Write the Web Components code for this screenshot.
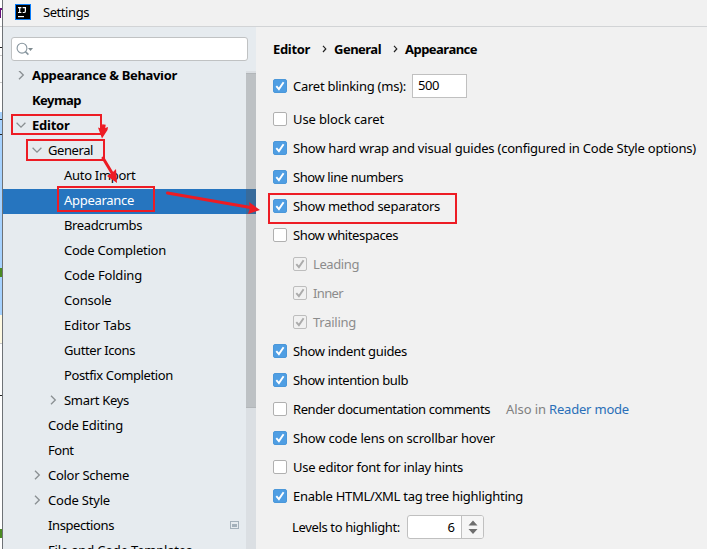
<!DOCTYPE html>
<html lang="en">
<head>
<meta charset="utf-8">
<title>Settings</title>
<style>
html,body{margin:0;height:100%;overflow:hidden}
body{font:13px/18px "Noto Sans","Open Sans",sans-serif;color:#000;background:#f1f1f1}
</style>
</head>
<body>
<settings-window></settings-window>
<script>
/* Text label that tracks its glyphs so that it spans the width given in w. */
class FitText extends HTMLElement{
  connectedCallback(){
    this.attachShadow({mode:'open'}).innerHTML=`<style>:host{display:inline-block;white-space:pre;flex:none}span{display:inline-block}</style><span><slot></slot></span>`;
    const s=this.shadowRoot.querySelector('span'),w=+this.getAttribute('w');
    if(w){
      const n=this.textContent.length;
      s.style.letterSpacing=((w-s.getBoundingClientRect().width)/n)+'px';
      this.style.width=w+'px';
    }
  }
}
class EditorStrip extends HTMLElement{
  connectedCallback(){
    this.attachShadow({mode:'open'}).innerHTML=`<style>:host{display:block;width:2px;flex:none;border-right:1px solid #6e7276;overflow:hidden}svg{display:block}</style>
    <svg width="2" height="549" shape-rendering="crispEdges"><rect width="2" height="549" fill="#fff"/><path fill="#a6d2ff" d="M0 112h2v203H0z"/><path fill="#fffae3" d="M0 315h2v28H0z"/>
    <path fill="#660e7a" d="M0 8h1v10H0zM1 8h1v2H1z"/><path fill="#c9c9c9" d="M0 26h2v1H0zM0 55h2v1H0zM0 82h2v1H0zM0 343h2v1H0z"/><path fill="#222" d="M0 47h2v1H0zM0 119h2v1H0zM0 134h2v1H0zM0 395h2v1H0z"/><path fill="#4b8b22" d="M0 268h2v9H0zM0 529h2v9H0z"/></svg>`;
  }
}
class TitleBar extends HTMLElement{
  connectedCallback(){
    this.attachShadow({mode:'open'}).innerHTML=`<style>:host{display:flex;align-items:center;height:27px;box-sizing:border-box;padding:0 0 2px 12px;gap:12px;border-bottom:1px solid #d2d4d6;background:#f1f1f1}svg{display:block;flex:none}</style>
    <svg width="16" height="16" viewBox="0 0 16 16"><rect width="16" height="16" fill="#087cfa"/><rect x="1" y="1" width="14" height="14" fill="#000"/><path d="M3 3.6h3.4M4.7 3.6v5M3 8.5h3.4M7.6 3.6h2.8v3.6q0 1.3-1.4 1.3H7.7" fill="none" stroke="#fff" stroke-width="1.2"/><path d="M3 12h6v1.2H3z" fill="#fff"/></svg><fit-text w="46">Settings</fit-text>`;
  }
}
class SearchBox extends HTMLElement{
  connectedCallback(){
    this.attachShadow({mode:'open'}).innerHTML=`<style>:host{display:block;box-sizing:border-box;width:237px;height:24px;border:1px solid #c0c2c3;border-radius:3px;background:#fff;padding:4px 0 0 4px}svg{display:block}</style>
    <svg width="18" height="15" viewBox="0 0 18 15"><circle cx="6" cy="6.200" r="4.900" fill="none" stroke="#87959e" stroke-width="1.1"/><path d="m9.4 9.6 3 3" stroke="#87959e" stroke-width="1.5"/><path d="M12 6h5l-2.500 3z" fill="#7f8b91"/></svg>`;
  }
}
class TreeRow extends HTMLElement{
  connectedCallback(){
    const lvl=+this.getAttribute('level')||0,a=this.getAttribute('arrow'),w=this.getAttribute('w');
    const d=a==='open'?'M1.6 3.8 6 8.2l4.4-4.4':'m4 1.7 4.3 4.3L4 10.3';
    this.attachShadow({mode:'open'}).innerHTML=`<style>:host{display:flex;align-items:center;height:25px;box-sizing:border-box;padding:0 0 3px ${12+lvl*16}px;flex:none;font-weight:${lvl?400:700}}
    :host([selected]){background:#2675bf;color:#fff}.a{display:block;width:12px;height:12px;margin-right:5px;flex:none}.m{margin-left:auto;margin-right:7px}</style>
    <svg class="a" viewBox="0 0 12 12">${a?`<path d="${d}" fill="none" stroke="#8a8f92" stroke-width="1.3"/>`:''}</svg><fit-text w="${w}">${this.innerHTML}</fit-text>${this.hasAttribute('mark')?'<svg class="m" width="9" height="8" shape-rendering="crispEdges"><path d="M0 0h9v8H0z" fill="#a4b1bb"/><path d="M1 1h7v6H1z" fill="#e6ebef"/><path d="M2 3h5v3H2z" fill="#a4b1bb"/></svg>':''}`;
  }
}
class SettingsTree extends HTMLElement{
  connectedCallback(){
    const rows=[['Appearance &amp; Behavior',0,145,'closed'],['Keymap',0,49],['Editor',0,37.5,'open'],['General',1,45,'open'],['Auto Import',2,71.5],['Appearance',2,70,'','selected'],['Breadcrumbs',2,78],['Code Completion',2,102],['Code Folding',2,78],['Console',2,47.5],['Editor Tabs',2,67],['Gutter Icons',2,71],['Postfix Completion',2,109],['Smart Keys',2,65,'closed'],['Code Editing',1,75],['Font',1,25.5],['Color Scheme',1,81],['Code Style',1,62],['Inspections',1,66,'','mark'],['File and Code Templates',1,144]];
    rows[16][3]=rows[17][3]='closed';
    this.attachShadow({mode:'open'}).innerHTML=`<style>:host{display:flex;flex:1;min-height:0;overflow:hidden}.rows{flex:1;overflow:hidden;display:flex;flex-direction:column}.rows tree-row:first-child{margin-top:-7px}
    .bar{width:10px;background:#dbdfe3;padding-top:2px;box-sizing:border-box}.thumb{height:335px;background:linear-gradient(#386b9b,#386b9b) 0 115px/10px 25px no-repeat #bdc1c4;border:solid #b2b6b9;border-width:1px 0 1px;box-sizing:border-box}</style>
    <div class="rows">${rows.map(r=>`<tree-row level="${r[1]}" w="${r[2]}" arrow="${r[3]||''}" ${r[4]||''}>${r[0]}</tree-row>`).join('')}</div><div class="bar"><div class="thumb"></div></div>`;
  }
}
class SideBar extends HTMLElement{
  connectedCallback(){
    this.attachShadow({mode:'open'}).innerHTML=`<style>:host{display:flex;flex-direction:column;width:253px;flex:none;background:#e6ebef;min-height:0}search-box{margin:10px 0 10px 8px;flex:none}</style><search-box></search-box><settings-tree></settings-tree>`;
  }
}
class CheckBox extends HTMLElement{
  connectedCallback(){
    const on=this.hasAttribute('on'),dis=this.hasAttribute('dis');
    this.attachShadow({mode:'open'}).innerHTML=`<style>:host{display:flex;align-items:center;gap:6px;height:29px;flex:none;color:${dis?'#8c8c8c':'#000'}}:host([dis]){padding-left:20px}svg{display:block;flex:none}::slotted(*){flex:none}</style>
    <svg width="14" height="14" viewBox="0 0 14 14"><rect x=".5" y=".5" width="13" height="13" rx="1.5" fill="${dis?'#f1f1f1':on?'#4f9ee3':'#fff'}" stroke="${dis?'#bdbdbd':on?'#4b97d9':'#b0b0b0'}"/>${on?`<path d="m3.3 7.2 2.6 2.9 4.7-6.8" fill="none" stroke="${dis?'#ababab':'#fff'}" stroke-width="1.9"/>`:''}</svg><fit-text w="${this.getAttribute('w')}">${this.getAttribute('label')}</fit-text><slot></slot>`;
  }
}
class NumberSpinner extends HTMLElement{
  connectedCallback(){
    this.attachShadow({mode:'open'}).innerHTML=`<style>:host{display:flex;box-sizing:border-box;width:77px;height:24px;border:1px solid #c0c0c0;border-radius:3px;background:#fff;overflow:hidden}.v{flex:1;text-align:right;padding-right:6px;line-height:23px}.s{width:21px;border-left:1px solid #c0c0c0;background:#f5f5f5}svg{display:block}</style><div class="v"><slot></slot></div><div class="s"><svg width="21" height="22"><path d="M6.5 9.5 11 4.5l4.5 5zM6.5 13 11 18l4.5-5z" fill="#6e6e6e"/></svg></div>`;
  }
}
class SettingsPanel extends HTMLElement{
  connectedCallback(){
    const sep='<svg width="5" height="8" viewBox="0 0 5 8"><path d="m1 .8 2.8 3.1L1 7" fill="none" stroke="#222" stroke-width="1.2"/></svg>';
    this.attachShadow({mode:'open'}).innerHTML=`<style>:host{display:flex;flex-direction:column;flex:1;min-width:0;padding:12px 0 0 17px;background:#f1f1f1}
    .crumbs{display:flex;align-items:center;height:20px;font-weight:700;margin-bottom:8px}.crumbs svg{display:block;margin:0 7px 0 12px}
    .first{height:38px;margin-bottom:-1px}.in{box-sizing:border-box;width:55px;height:24px;border:1px solid #c0c0c0;background:#fff;line-height:21px;padding-left:5px;margin-left:0}
    .also{color:#808080;display:flex;margin-left:10px}.also b{font-weight:400;color:#2a6fb8;display:block;margin-left:3px}
    .lv{display:flex;align-items:center;height:33px;padding-left:19px;gap:7px}</style>
    <div class="crumbs"><fit-text w="37">Editor</fit-text>${sep}<fit-text w="47">General</fit-text>${sep}<fit-text w="72">Appearance</fit-text></div>
    <check-box class="first" on w="113" label="Caret blinking (ms):"><div class="in"><fit-text w="21">500</fit-text></div></check-box>
    <check-box w="91" label="Use block caret"></check-box>
    <check-box on w="403" label="Show hard wrap and visual guides (configured in Code Style options)"></check-box>
    <check-box on w="110" label="Show line numbers"></check-box>
    <check-box on w="147" label="Show method separators"></check-box>
    <check-box w="105" label="Show whitespaces"></check-box>
    <check-box on dis w="46" label="Leading"></check-box>
    <check-box on dis w="30" label="Inner"></check-box>
    <check-box on dis w="43" label="Trailing"></check-box>
    <check-box on w="114" label="Show indent guides"></check-box>
    <check-box on w="115" label="Show intention bulb"></check-box>
    <check-box w="197" label="Render documentation comments"><div class="also"><fit-text w="40">Also in</fit-text><b><fit-text w="80">Reader mode</fit-text></b></div></check-box>
    <check-box on w="202" label="Show code lens on scrollbar hover"></check-box>
    <check-box w="170" label="Use editor font for inlay hints"></check-box>
    <check-box on w="230" label="Enable HTML/XML tag tree highlighting"></check-box>
    <div class="lv"><fit-text w="108">Levels to highlight:</fit-text><number-spinner>6</number-spinner></div>`;
  }
}
/* Red frames and arrows laid over the window. */
class MarkupLayer extends HTMLElement{
  connectedCallback(){
    this.attachShadow({mode:'open'}).innerHTML=`<style>:host{display:block;position:absolute;left:0;top:0;pointer-events:none}svg{display:block}</style>
    <svg width="707" height="549" fill="none" stroke="#ed1c24" stroke-width="2"><path d="M12 115h89v19H12zM27 140h77v20H27zM58 187h96v24H58zM269 194h187v29H269z" shape-rendering="crispEdges"/>
    <path d="M104 124.500l-1 6" stroke-width="3.500"/><path d="M102 138.500l-4-11 4.500 1.500 5.500-2-.5 3z" fill="#ed1c24" stroke="none"/><path d="M103 158l9 15M167.500 193l83 14.500" stroke-width="3" stroke-linecap="round"/><path d="m117 183-10-7 5-3 4-4zM260 210l-12 4 2-6-1-6z" fill="#ed1c24" stroke="none"/></svg>`;
  }
}
class SettingsWindow extends HTMLElement{
  connectedCallback(){
    this.attachShadow({mode:'open'}).innerHTML=`<style>:host{display:flex;width:707px;height:549px;overflow:hidden;position:relative}.win{flex:1;display:flex;flex-direction:column;min-width:0}.body{display:flex;flex:1;min-height:0}</style>
    <editor-strip></editor-strip><div class="win"><title-bar></title-bar><div class="body"><side-bar></side-bar><settings-panel></settings-panel></div></div><markup-layer></markup-layer>`;
  }
}
for(const [n,c] of Object.entries({'fit-text':FitText,'editor-strip':EditorStrip,'title-bar':TitleBar,'search-box':SearchBox,'tree-row':TreeRow,'settings-tree':SettingsTree,'side-bar':SideBar,'check-box':CheckBox,'number-spinner':NumberSpinner,'settings-panel':SettingsPanel,'markup-layer':MarkupLayer,'settings-window':SettingsWindow}))customElements.define(n,c);
</script>
</body>
</html>
